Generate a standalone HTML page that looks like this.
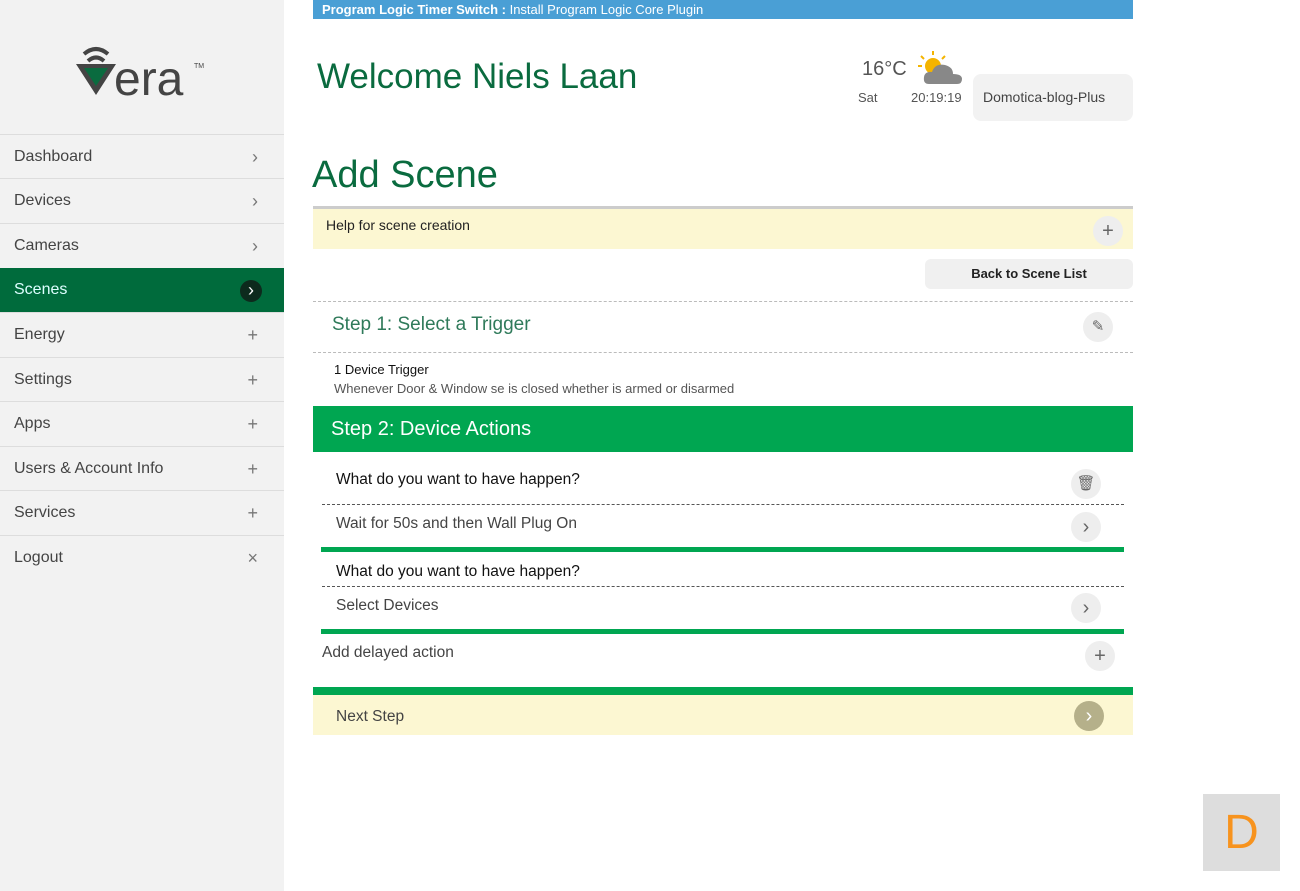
<!DOCTYPE html><html><head><style>
body{margin:0;width:1300px;height:891px;position:relative;background:#fff;font-family:"Liberation Sans",sans-serif;overflow:hidden}
.a{position:absolute}
.side{left:0;top:0;width:284px;height:891px;background:#f2f2f2}
.it{position:absolute;left:0;width:284px;height:44px;border-top:1px solid #ddd;font-size:16px;color:#444;line-height:44px;text-indent:14px}
.it span{position:absolute;right:26px;top:0;color:#777;text-indent:0;font-size:18px}
.circ{border-radius:50%;background:#eee;width:30px;height:30px;text-align:center;line-height:30px;color:#666;font-size:20px}
.dash{border-top:1px dashed #bbb}
</style></head><body>
<div class="a side">
<div class="a" style="left:74px;top:42px;width:134px;height:60px">
<svg width="134" height="60"><path d="M10 12 Q22 2 34 12" stroke="#444" stroke-width="4" fill="none"/><path d="M14 19 Q22 12 30 19" stroke="#444" stroke-width="4" fill="none"/><path d="M2 22 L42 22 L22 53 Z" fill="#444"/><path d="M10 26 L34 26 L22 44 Z" fill="#0a6b3f"/><text x="40" y="53" font-size="48" font-family="Liberation Sans" fill="#444">era</text><text x="120" y="26" font-size="7" fill="#444">TM</text></svg></div>
<div class="it" style="top:134px">Dashboard<span>›</span></div>
<div class="it" style="top:178px">Devices<span>›</span></div>
<div class="it" style="top:223px">Cameras<span>›</span></div>
<div class="it" style="top:268px;background:#006b3c;color:#dff;border:none;height:45px"><span style="right:22px;top:12px;width:22px;height:22px;border-radius:50%;background:#0d2a1d;color:#fff;line-height:20px;text-align:center">›</span>Scenes</div>
<div class="it" style="top:312px">Energy<span>+</span></div>
<div class="it" style="top:357px">Settings<span>+</span></div>
<div class="it" style="top:401px">Apps<span>+</span></div>
<div class="it" style="top:446px">Users &amp; Account Info<span>+</span></div>
<div class="it" style="top:490px">Services<span>+</span></div>
<div class="it" style="top:535px">Logout<span>×</span></div>
</div>
<div class="a" style="left:313px;top:0;width:820px;height:19px;background:#4a9fd5;color:#fff;font-size:13px;line-height:19px;text-indent:9px"><b>Program Logic Timer Switch :</b> Install Program Logic Core Plugin</div>
<div class="a" style="left:317px;top:57px;font-size:35px;color:#0a6b3f">Welcome Niels Laan</div>
<div class="a" style="left:862px;top:58px;font-size:20px;color:#555">16°C</div>
<svg class="a" style="left:915px;top:48px" width="50" height="38"><circle cx="18" cy="18" r="8" fill="#f4b400"/><path d="M18 3v4M6 8l3 3M3 18h4M30 8l-3 3" stroke="#f4b400" stroke-width="2"/><path d="M14 36 Q8 36 9 29 Q10 23 17 24 Q20 15 30 17 Q38 19 38 26 Q47 26 47 31 Q47 36 42 36Z" fill="#888"/></svg>
<div class="a" style="left:858px;top:90px;font-size:13px;color:#555">Sat</div>
<div class="a" style="left:911px;top:90px;font-size:13px;color:#555">20:19:19</div>
<div class="a" style="left:973px;top:74px;width:160px;height:47px;background:#f2f2f2;border-radius:8px;font-size:14px;color:#444;line-height:47px;text-indent:10px">Domotica-blog-Plus</div>
<div class="a" style="left:312px;top:154px;font-size:38px;color:#0a6b3f">Add Scene</div>
<div class="a" style="left:313px;top:206px;width:820px;height:40px;background:#fcf7d2;border-top:3px solid #ccc"><div class="a" style="left:13px;top:8px;font-size:14px;color:#222">Help for scene creation</div><div class="a circ" style="right:10px;top:7px">+</div></div>
<div class="a" style="left:925px;top:259px;width:208px;height:30px;background:#f0f0f0;border-radius:6px;text-align:center;line-height:30px;font-size:13px;font-weight:bold;color:#222">Back to Scene List</div>
<div class="a dash" style="left:313px;top:301px;width:820px"></div>
<div class="a" style="left:332px;top:314px;font-size:19px;color:#2f7a5a">Step 1: Select a Trigger</div>
<div class="a circ" style="left:1083px;top:312px;font-size:15px">✎</div>
<div class="a dash" style="left:313px;top:352px;width:820px"></div>
<div class="a" style="left:334px;top:362px;font-size:13px;color:#111">1 Device Trigger</div>
<div class="a" style="left:334px;top:381px;font-size:13px;color:#555">Whenever Door &amp; Window se is closed whether is armed or disarmed</div>
<div class="a" style="left:313px;top:406px;width:820px;height:46px;background:#00a651;color:#fff;font-size:20px;line-height:46px;text-indent:18px">Step 2: Device Actions</div>
<div class="a" style="left:336px;top:471px;font-size:15.5px;color:#111">What do you want to have happen?</div>
<div class="a circ" style="left:1071px;top:469px;font-size:15px">🗑</div>
<div class="a dash" style="left:322px;top:504px;width:802px;border-color:#555"></div>
<div class="a" style="left:336px;top:515px;font-size:15.5px;color:#444">Wait for 50s and then Wall Plug On</div>
<div class="a circ" style="left:1071px;top:512px">›</div>
<div class="a" style="left:321px;top:547px;width:803px;height:5px;background:#00a651"></div>
<div class="a" style="left:336px;top:563px;font-size:15.5px;color:#111">What do you want to have happen?</div>
<div class="a dash" style="left:322px;top:586px;width:802px;border-color:#555"></div>
<div class="a" style="left:336px;top:597px;font-size:15.5px;color:#444">Select Devices</div>
<div class="a circ" style="left:1071px;top:593px">›</div>
<div class="a" style="left:321px;top:629px;width:803px;height:5px;background:#00a651"></div>
<div class="a" style="left:322px;top:644px;font-size:15.5px;color:#444">Add delayed action</div>
<div class="a circ" style="left:1085px;top:641px">+</div>
<div class="a" style="left:313px;top:687px;width:820px;height:8px;background:#00a651"></div>
<div class="a" style="left:313px;top:695px;width:820px;height:40px;background:#fcf7d2"><div class="a" style="left:23px;top:13px;font-size:15.5px;color:#444">Next Step</div><div class="a circ" style="left:761px;top:6px;background:#b5b08a;color:#fff">›</div></div>
<div class="a" style="left:1203px;top:794px;width:77px;height:77px;background:#ddd;color:#f7931e;font-size:48px;text-align:center;line-height:77px">D</div>
</body></html>
